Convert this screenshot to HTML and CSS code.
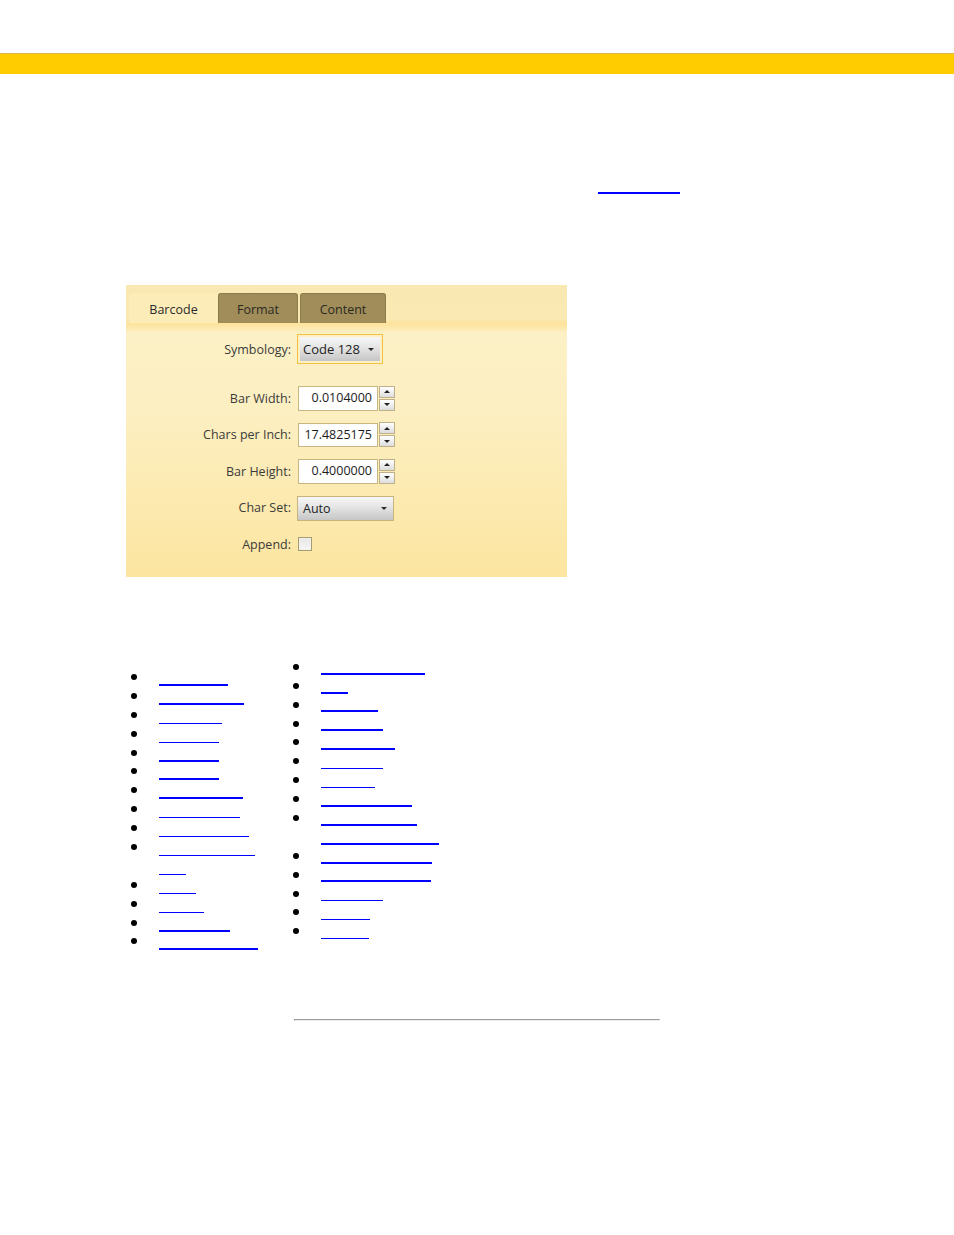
FILE: index.html
```html
<!DOCTYPE html>
<html>
<head>
<meta charset="utf-8">
<link rel="stylesheet" href="styles.css">
</head>
<body>
<div class="topbar"></div>
<div class="intro"><a class="xref" href="#" aria-label="link"></a></div>

<div class="panel">
  <div class="tabs">
    <div class="tab active">Barcode</div>
    <div class="tab">Format</div>
    <div class="tab tab-content">Content</div>
  </div>
  <div class="form">
    <div class="row row-first">
      <div class="lbl">Symbology:</div>
      <div class="focus">
        <div class="select select-sym"><span>Code 128</span><i class="arrow"></i></div>
      </div>
    </div>
    <div class="row">
      <div class="lbl">Bar Width:</div>
      <div class="num">0.0104000</div>
      <div class="spin"><b class="up"></b><b class="down"></b></div>
    </div>
    <div class="row">
      <div class="lbl">Chars per Inch:</div>
      <div class="num">17.4825175</div>
      <div class="spin"><b class="up"></b><b class="down"></b></div>
    </div>
    <div class="row">
      <div class="lbl">Bar Height:</div>
      <div class="num">0.4000000</div>
      <div class="spin"><b class="up"></b><b class="down"></b></div>
    </div>
    <div class="row">
      <div class="lbl">Char Set:</div>
      <div class="select select-set"><span>Auto</span><i class="arrow"></i></div>
    </div>
    <div class="row">
      <div class="lbl">Append:</div>
      <div class="check"></div>
    </div>
  </div>
</div>

<div class="lists">
  <ul class="list list-left">
    <li><a href="#" class="ln"><span class="seg thick" style="width:69px"></span></a></li>
    <li><a href="#" class="ln"><span class="seg thick" style="width:85px"></span></a></li>
    <li><a href="#" class="ln"><span class="seg" style="width:63px"></span></a></li>
    <li><a href="#" class="ln"><span class="seg" style="width:60px"></span></a></li>
    <li><a href="#" class="ln"><span class="seg thick" style="width:60px"></span></a></li>
    <li><a href="#" class="ln"><span class="seg thick" style="width:60px"></span></a></li>
    <li><a href="#" class="ln"><span class="seg thick" style="width:84px"></span></a></li>
    <li><a href="#" class="ln"><span class="seg" style="width:81px"></span></a></li>
    <li><a href="#" class="ln"><span class="seg" style="width:90px"></span></a></li>
    <li><a href="#" class="ln"><span class="seg" style="width:96px"></span><span class="seg" style="width:27px"></span></a></li>
    <li><a href="#" class="ln"><span class="seg" style="width:37px"></span></a></li>
    <li><a href="#" class="ln"><span class="seg" style="width:45px"></span></a></li>
    <li><a href="#" class="ln"><span class="seg thick" style="width:71px"></span></a></li>
    <li><a href="#" class="ln"><span class="seg thick" style="width:99px"></span></a></li>
  </ul>
  <ul class="list list-right">
    <li><a href="#" class="ln"><span class="seg thick" style="width:104px"></span></a></li>
    <li><a href="#" class="ln"><span class="seg thick" style="width:27px"></span></a></li>
    <li><a href="#" class="ln"><span class="seg thick" style="width:57px"></span></a></li>
    <li><a href="#" class="ln"><span class="seg thick" style="width:62px"></span></a></li>
    <li><a href="#" class="ln"><span class="seg thick" style="width:74px"></span></a></li>
    <li><a href="#" class="ln"><span class="seg" style="width:62px"></span></a></li>
    <li><a href="#" class="ln"><span class="seg" style="width:54px"></span></a></li>
    <li><a href="#" class="ln"><span class="seg thick" style="width:91px"></span></a></li>
    <li><a href="#" class="ln"><span class="seg thick" style="width:96px"></span><span class="seg thick" style="width:118px"></span></a></li>
    <li><a href="#" class="ln"><span class="seg thick" style="width:111px"></span></a></li>
    <li><a href="#" class="ln"><span class="seg thick" style="width:110px"></span></a></li>
    <li><a href="#" class="ln"><span class="seg" style="width:62px"></span></a></li>
    <li><a href="#" class="ln"><span class="seg" style="width:49px"></span></a></li>
    <li><a href="#" class="ln"><span class="seg" style="width:48px"></span></a></li>
  </ul>
</div>

<hr class="rule">
</body>
</html>
```

FILE: styles.css
```css
html, body {
  margin: 0;
  padding: 0;
  background: #ffffff;
}
body {
  font-family: "Open Sans", "Noto Sans", "DejaVu Sans", sans-serif;
}

.topbar {
  margin-top: 53px;
  height: 21px;
  background: #ffcc00;
  border-top: 1px solid #d9b64a;
  box-sizing: border-box;
}

.intro {
  margin-top: 118px;
}
.xref {
  display: block;
  margin-left: 598px;
  width: 82px;
  height: 0;
  border-bottom: 2px solid #0000ff;
}

/* ---------- panel ---------- */
.panel {
  margin-top: 91px;
  margin-left: 126px;
  width: 441px;
  height: 292px;
  background: linear-gradient(to bottom,
    #f9e8b1 0px,
    #fae9b3 34px,
    #fde39c 38px,
    #fde6a5 41px,
    #fcf0c6 48px,
    #fcefc2 120px,
    #fce9ad 230px,
    #fce5a0 292px);
  font-size: 12.5px;
  color: #3a3a3a;
}

.tabs {
  display: flex;
  height: 38px;
  padding: 8px 0 0 3px;
  box-sizing: border-box;
}
.tab {
  height: 30px;
  width: 80px;
  box-sizing: border-box;
  display: flex;
  align-items: center;
  justify-content: center;
  background: #a08d5a;
  border: 1px solid #8c7b4b;
  border-bottom: none;
  border-radius: 3px 3px 0 0;
  color: #2a2a22;
  padding-top: 1px;
}
.tab.active {
  width: 89px;
  background: #fbecb8;
  border-color: transparent;
  color: #2b2b2b;
}
.tab-content {
  width: 86px;
  margin-left: 2px;
}

.form {
  padding-top: 11px;
}
.row {
  display: flex;
  align-items: center;
  height: 24.5px;
  margin-bottom: 12px;
}
.row-first {
  height: 30px;
  margin-bottom: 22px;
}
.lbl {
  width: 171px;
  text-align: right;
  padding-right: 6px;
  box-sizing: border-box;
  white-space: nowrap;
  color: #3b3b3b;
}

.focus {
  width: 86px;
  height: 30px;
  box-sizing: border-box;
  border: 1px solid #f3c142;
  padding: 2px;
  background: #fdf0c4;
  display: flex;
}
.select {
  display: flex;
  align-items: center;
  box-sizing: border-box;
  background: linear-gradient(to bottom, #f7f7f7 0%, #e4e4e4 45%, #c6c6c6 100%);
  color: #222222;
}
.select-sym {
  flex: 1;
  padding-left: 3px;
  font-size: 13px;
}
.select-set {
  width: 97px;
  height: 25px;
  border: 1px solid #c8b57e;
  padding-left: 5px;
  margin-top: 1px;
  font-size: 12.5px;
}
.select span {
  flex: 1;
}
.arrow {
  width: 0;
  height: 0;
  border-left: 3px solid transparent;
  border-right: 3px solid transparent;
  border-top: 3px solid #2a2a2a;
  margin-right: 6px;
  margin-top: 1px;
}

.num {
  width: 80px;
  height: 24.5px;
  box-sizing: border-box;
  margin-left: 1px;
  border: 1px solid #c9b67e;
  background: #ffffff;
  text-align: right;
  padding-right: 5px;
  line-height: 22px;
  color: #1c1c1c;
}
.spin {
  width: 16px;
  height: 25px;
  margin-left: 1px;
  display: flex;
  flex-direction: column;
  gap: 1px;
}
.spin b {
  flex: 1;
  box-sizing: border-box;
  border: 1px solid #bfb089;
  background: linear-gradient(to bottom, #ffffff 0%, #ececec 60%, #dcdcdc 100%);
  display: flex;
  align-items: center;
  justify-content: center;
}
.spin b::after {
  content: "";
  width: 0;
  height: 0;
  border-left: 3px solid transparent;
  border-right: 3px solid transparent;
}
.spin .up::after {
  border-bottom: 3px solid #222;
}
.spin .down::after {
  border-top: 3px solid #222;
}

.check {
  width: 14px;
  height: 14px;
  margin-left: 1px;
  box-sizing: border-box;
  border: 1px solid #a69a78;
  background: linear-gradient(to bottom, #e6e6e6 0%, #f6f6f6 100%);
  box-shadow: inset 0 0 0 1px #f4f1e6;
}

/* ---------- lists ---------- */
.lists {
  margin-top: 82.7px;
  display: flex;
  align-items: flex-start;
}
.list {
  list-style: none;
  margin: 0;
  padding: 0;
}
.list-left {
  margin-top: 10.3px;
  padding-left: 131px;
  width: 162px;
}
.list li {
  display: flex;
  align-items: flex-start;
}
.list li::before {
  content: "";
  flex-shrink: 0;
  width: 6px;
  height: 6px;
  border-radius: 50%;
  background: #000000;
  margin-top: 4px;
  margin-right: 22px;
}
.list-right li::before {
  margin-top: 4.2px;
}
.ln {
  display: flex;
  flex-direction: column;
}
.seg {
  display: block;
  box-sizing: border-box;
  height: 16px;
  margin-bottom: 2.9px;
  border-bottom: 1px solid #0000ff;
}
.seg.thick {
  border-bottom-width: 2px;
}
.list-right .seg {
  height: 15px;
  margin-bottom: 3.9px;
}

.rule {
  width: 364px;
  margin: 66px auto 0 auto;
}
```
